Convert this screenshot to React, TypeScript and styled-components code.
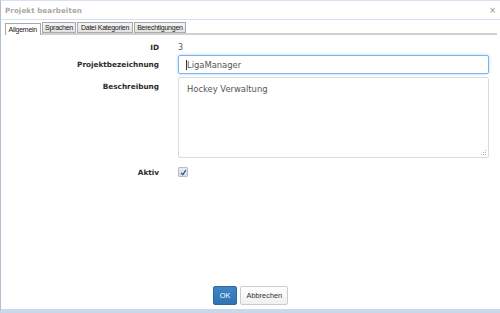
import React from 'react';
import styled, { createGlobalStyle } from 'styled-components';

const GlobalStyle = createGlobalStyle`
  html, body {
    margin: 0;
    padding: 0;
    background: #ffffff;
  }
  * {
    box-sizing: border-box;
  }
`;

const Dialog = styled.div`
  width: 500px;
  height: 313px;
  display: flex;
  flex-direction: column;
  background: #ffffff;
  border-left: 1px solid #b3bfcf;
  border-top: 1px solid #d6e3f3;
  border-bottom: 4px solid #c9d8ec;
  font-family: 'DejaVu Sans', Verdana, sans-serif;
  overflow: hidden;
`;

const TitleBar = styled.div`
  height: 19px;
  display: flex;
  align-items: center;
  justify-content: space-between;
  padding: 1px 4px 0 4px;
  border-bottom: 1px solid #d3e1f2;
`;

const Title = styled.span`
  font-size: 7.1px;
  font-weight: bold;
  color: #a8a8a8;
  letter-spacing: 0.1px;
`;

const CloseButton = styled.span`
  font-family: 'DejaVu Sans', sans-serif;
  font-size: 8px;
  color: #8c8c8c;
  line-height: 1;
  margin-top: 1px;
`;

const TabBar = styled.div`
  display: flex;
  align-items: flex-end;
  margin: 3px 3px 0 4px;
  height: 12px;
  border-bottom: 2px solid #cfcfd4;
`;

const Tab = styled.div<{ $active?: boolean }>`
  height: ${({ $active }) => ($active ? '12px' : '11px')};
  display: flex;
  align-items: center;
  padding: 0 2.5px;
  margin-right: 1px;
  margin-bottom: ${({ $active }) => ($active ? '-2px' : '0')};
  font-family: 'Liberation Sans', Arial, sans-serif;
  font-size: 7px;
  letter-spacing: -0.25px;
  color: #222222;
  border: 1px solid #a9a9a9;
  border-bottom: ${({ $active }) => ($active ? 'none' : '1px solid #a9a9a9')};
  background: ${({ $active }) =>
    $active ? '#ffffff' : 'linear-gradient(#f4f4f4, #e2e2e2)'};
`;

const Form = styled.div`
  display: flex;
  flex-direction: column;
  padding-top: 7px;
`;

const Row = styled.div<{ $align?: string; $gap?: number }>`
  display: grid;
  grid-template-columns: 158px 311px;
  column-gap: 19px;
  align-items: ${({ $align }) => $align || 'center'};
  margin-bottom: ${({ $gap }) => $gap ?? 3}px;
`;

const Label = styled.div<{ $top?: number }>`
  text-align: right;
  font-size: 7.3px;
  font-weight: bold;
  color: #2b2b2b;
  padding-top: ${({ $top }) => $top ?? 0}px;
`;

const Value = styled.div`
  font-size: 8px;
  color: #555555;
  height: 10px;
  display: flex;
  align-items: center;
`;

const TextInput = styled.div`
  height: 19px;
  border: 1px solid #7fb5e6;
  border-radius: 2px;
  box-shadow: 0 0 3px rgba(102, 175, 233, 0.6);
  display: flex;
  align-items: center;
  padding-left: 7px;
  font-size: 8.4px;
  color: #555555;
`;

const Caret = styled.span`
  display: inline-block;
  width: 1px;
  height: 10px;
  background: #333333;
`;

const TextArea = styled.div`
  position: relative;
  height: 81px;
  border: 1px solid #dcdcdc;
  border-radius: 2px;
  padding: 6px 8px;
  font-size: 8.4px;
  color: #555555;
`;

const Grip = styled.svg`
  position: absolute;
  right: 1px;
  bottom: 1px;
`;

const CheckBox = styled.div`
  width: 10px;
  height: 10px;
  border: 1px solid #b8bcc4;
  border-radius: 1px;
  background: linear-gradient(#e9ecf2, #d6dbe4);
  display: flex;
  align-items: center;
  justify-content: center;
`;

const Footer = styled.div`
  margin-top: auto;
  display: flex;
  justify-content: center;
  gap: 3px;
  padding-bottom: 4px;
`;

const Button = styled.div<{ $primary?: boolean }>`
  height: 19px;
  display: flex;
  align-items: center;
  padding: 0 ${({ $primary }) => ($primary ? '6px' : '5px')};
  border-radius: 2px;
  font-family: 'Liberation Sans', Arial, sans-serif;
  font-size: 7.4px;
  color: ${({ $primary }) => ($primary ? '#ffffff' : '#333333')};
  background: ${({ $primary }) =>
    $primary ? 'linear-gradient(#3e86c6, #2f73b1)' : 'linear-gradient(#ffffff, #f0f0f0)'};
  border: 1px solid ${({ $primary }) => ($primary ? '#2b689f' : '#cccccc')};
`;

export default function App() {
  return (
    <>
      <GlobalStyle />
      <Dialog>
        <TitleBar>
          <Title>Projekt bearbeiten</Title>
          <CloseButton>×</CloseButton>
        </TitleBar>
        <TabBar>
          <Tab $active>Allgemein</Tab>
          <Tab>Sprachen</Tab>
          <Tab>Datei Kategorien</Tab>
          <Tab>Berechtigungen</Tab>
        </TabBar>
        <Form>
          <Row>
            <Label>ID</Label>
            <Value>3</Value>
          </Row>
          <Row>
            <Label>Projektbezeichnung</Label>
            <TextInput>
              <Caret />
              LigaManager
            </TextInput>
          </Row>
          <Row $align="start" $gap={9}>
            <Label $top={5}>Beschreibung</Label>
            <TextArea>
              Hockey Verwaltung
              <Grip width="6" height="6" viewBox="0 0 6 6">
                <rect x="4" y="0" width="1" height="1" fill="#b0b0b0" />
                <rect x="2" y="2" width="1" height="1" fill="#b0b0b0" />
                <rect x="4" y="2" width="1" height="1" fill="#b0b0b0" />
                <rect x="0" y="4" width="1" height="1" fill="#b0b0b0" />
                <rect x="2" y="4" width="1" height="1" fill="#b0b0b0" />
                <rect x="4" y="4" width="1" height="1" fill="#b0b0b0" />
              </Grip>
            </TextArea>
          </Row>
          <Row>
            <Label>Aktiv</Label>
            <CheckBox>
              <svg width="7" height="7" viewBox="0 0 7 7">
                <path d="M1 3.8 L2.8 5.6 L6 1" fill="none" stroke="#2c3f9a" strokeWidth="1.2" />
              </svg>
            </CheckBox>
          </Row>
        </Form>
        <Footer>
          <Button $primary>OK</Button>
          <Button>Abbrechen</Button>
        </Footer>
      </Dialog>
    </>
  );
}
